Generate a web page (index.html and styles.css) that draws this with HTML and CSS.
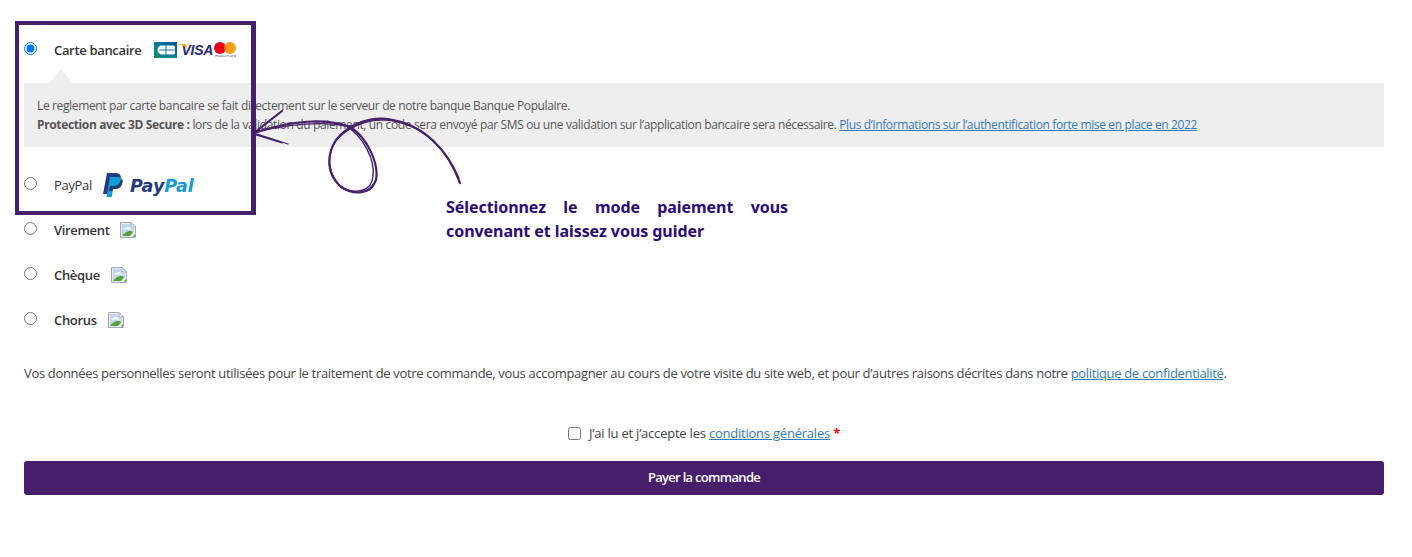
FILE: index.html
```html
<!DOCTYPE html>
<html lang="fr">
<head>
<meta charset="utf-8">
<title>Paiement</title>
<link rel="stylesheet" href="styles.css">
</head>
<body>
<main class="checkout">
  <form class="payment">
    <div class="method">
      <input class="radio" type="radio" name="pay" checked>
      <span class="method-label">Carte bancaire</span>
      <span class="logos">
        <svg class="logo-cb" width="23" height="16" viewBox="0 0 23 16" aria-hidden="true">
          <defs><linearGradient id="cbg" x1="0" y1="1" x2="1" y2="0"><stop offset="0" stop-color="#0b8a6e"/><stop offset=".5" stop-color="#0a7f96"/><stop offset="1" stop-color="#0b4f92"/></linearGradient></defs>
          <rect width="23" height="16" fill="url(#cbg)"/>
          <path d="M11.500 3.500H8a4.500 4.500 0 0 0 0 9h3.500V8.600H5.600V7.400h5.900z" fill="#fff"/>
          <path d="M12.500 3.500H19a2.200 2.200 0 0 1 1.500 3.700v1.600A2.200 2.200 0 0 1 19 12.500h-6.500V8.600h7V7.400h-7z" fill="#fff"/>
        </svg>
        <span class="visa"><svg class="visa-tick" width="9" height="6" viewBox="0 0 9 6" aria-hidden="true"><path d="M0 0h5.500c1 0 1.500.5 1.800 1.500L8 5C6.500 3 4 1 0 .5z" fill="#f2a31d"/></svg>VISA</span>
        <span class="mc">
          <svg width="22" height="12" viewBox="0 0 22 12" aria-hidden="true">
            <circle cx="6" cy="6" r="6" fill="#eb001b"/><circle cx="16" cy="6" r="6" fill="#f79e1b"/>
            <path d="M11 2.680a6 6 0 0 1 0 6.640 6 6 0 0 1 0-6.640z" fill="#ff5f00"/>
          </svg>
          <span class="mc-name">mastercard</span>
        </span>
      </span>
    </div>
    <div class="notice">
      Le reglement par carte bancaire se fait directement sur le serveur de notre banque Banque Populaire.<br>
      <strong>Protection avec 3D Secure :</strong> lors de la validation du paiement, un code sera envoyé par SMS ou une validation sur l’application bancaire sera nécessaire. <a href="#">Plus d’informations sur l’authentification forte mise en place en 2022</a>
    </div>
    <div class="method">
      <input class="radio" type="radio" name="pay">
      <span class="method-label light">PayPal</span>
      <span class="paypal">
        <svg width="20" height="24" viewBox="0 0 20 24" aria-hidden="true">
          <path d="M4 0h8c4 0 6.500 2 6 6-.6 4.500-3.500 7-8 7H7l-1.300 8H0z" fill="#253b80"/>
          <path d="M7 4h7c3.500 0 6 1.500 5.500 5-.6 4.500-3.500 7-7.500 7h-2l-1.200 8H3.500z" fill="#179bd7"/>
          <path d="M7 13h3c4.500 0 7.400-2.500 8-7 2 1 1.900 2 1.500 3-.6 4.500-3.500 7-7.500 7h-2l-.4 2H5.900z" fill="#222d65" opacity=".85"/>
        </svg>
        <span class="pp-word"><span class="pp-dark">Pay</span><span class="pp-light">Pal</span></span>
      </span>
    </div>
    <div class="method">
      <input class="radio" type="radio" name="pay">
      <span class="method-label">Virement</span>
      <svg class="broken" width="16" height="16" viewBox="0 0 16 16" aria-hidden="true"><use href="#broken-img"/></svg>
    </div>
    <div class="method">
      <input class="radio" type="radio" name="pay">
      <span class="method-label">Chèque</span>
      <svg class="broken" width="16" height="16" viewBox="0 0 16 16" aria-hidden="true"><use href="#broken-img"/></svg>
    </div>
    <div class="method">
      <input class="radio" type="radio" name="pay">
      <span class="method-label">Chorus</span>
      <svg class="broken" width="16" height="16" viewBox="0 0 16 16" aria-hidden="true"><use href="#broken-img"/></svg>
    </div>
    <p class="privacy">Vos données personnelles seront utilisées pour le traitement de votre commande, vous accompagner au cours de votre visite du site web, et pour d’autres raisons décrites dans notre <a href="#">politique de confidentialité</a>.</p>
    <label class="terms">
      <input class="check" type="checkbox">
      <span>J’ai lu et j’accepte les <a href="#">conditions générales</a> <b class="req">*</b></span>
    </label>
    <button class="pay-btn" type="button">Payer la commande</button>
  </form>

  <div class="frame"></div>
  <svg class="scribble" width="240" height="110" viewBox="240 90 240 110" aria-hidden="true">
    <g fill="none" stroke="#47206b" stroke-linecap="round">
      <path stroke-width="2.200" d="M460 183C448 150 424 124 388 119C366 117 347 126 336 140C326 156 327 174 340 186C352 195 370 196 376 180C379 164 368 138 350 127C326 118 292 120 254 133"/>
      <path stroke-width="1.400" d="M459 178C446 148 420 122 385 120C364 119 345 129 334 143C325 160 330 176 342 188C355 194 372 192 373 176C375 160 364 137 346 126C320 121 290 124 256 132"/>
      <path stroke-width="2.200" d="M254 133L282 111"/>
      <path stroke-width="1.200" d="M254 133L288 144M256 135L282 143"/>
    </g>
  </svg>
  <p class="callout">Sélectionnez le mode paiement vous convenant et laissez vous guider</p>
</main>

<svg class="defs" width="0" height="0" aria-hidden="true">
  <symbol id="broken-img" viewBox="0 0 16 16">
    <path d="M.5.500h10.500l4.500 4.500v10.500H.5z" fill="#e8eaee" stroke="#a3aab5"/>
    <path d="M2 2h8.500v4H14v7H2z" fill="#c3d7f3"/>
    <path d="M3 7.500c1-2 3-1.500 4-2.500 1.500-.5 3 1 5 2.500z" fill="#f4f7fc"/>
    <path d="M2 14c2-3 5-5 8-5 1 0 2 0 3 1l-3 4z" fill="#4fa32f"/>
    <path d="M11 .5v4.500h4.500z" fill="#f4f5f7" stroke="#a3aab5"/>
    <path d="M9.500 15l5.500-5v2l-3 3z" fill="#fff"/>
    <path d="M12.500 14.500l2.500-2.500v2.500z" fill="#4fa32f"/>
  </symbol>
</svg>
</body>
</html>
```
FILE: styles.css
```css
* { box-sizing: border-box; }
html, body { margin: 0; padding: 0; background: #fff; }
body {
  font-family: "Open Sans", "Noto Sans", sans-serif;
  font-size: 13px;
  letter-spacing: -0.33px;
  color: #444;
}
a { color: #337ab7; text-decoration: underline; }
.checkout { position: relative; padding: 26px 28px 0 24px; width: 1412px; height: 557px; overflow: hidden; }
.payment { display: flex; flex-direction: column; }
.method { display: flex; align-items: center; height: 45px; }
.radio { width: 13px; height: 13px; margin: 0 17px 0 0; flex: none; accent-color: #0075ff; }
.method-label { font-weight: 600; color: #333; line-height: 20px; margin-top: 3px; }
.method-label.light { font-weight: 400; }
.logos { display: flex; align-items: center; margin-left: 13px; margin-top: 3px; gap: 2px; }
.logo-cb { display: block; }
.visa { position: relative; font: italic 700 14px/16px "Liberation Sans", sans-serif; letter-spacing: -0.2px; color: #252b72; width: 33px; padding-left: 2px; }
.visa-tick { position: absolute; left: 0; top: 2px; }
.mc { display: flex; flex-direction: column; align-items: center; }
.mc svg { display: block; }
.mc-name { font-size: 4px; line-height: 4px; letter-spacing: 0; color: #444; }
.notice { position: relative; margin: 12px 0 14px; padding: 13px; height: 64px; background: #eee; font-size: 12px; letter-spacing: -0.36px; line-height: 19px; color: #555; }
.notice strong { font-weight: 700; }
.notice::before { content: ""; position: absolute; left: 25px; top: -14px; border: 12px solid transparent; border-top: 0; border-bottom: 14px solid #eee; }
.paypal { display: flex; align-items: center; margin-left: 11px; gap: 7px; margin-top: 3px; }
.paypal svg { display: block; }
.pp-word { font: italic 700 17.500px/24px "DejaVu Sans", sans-serif; letter-spacing: 0; margin-top: 2px; }
.pp-dark { color: #253b80; }
.pp-light { color: #179bd7; }
.broken { margin-left: 11px; margin-top: 3px; flex: none; }
.defs { position: absolute; }
.privacy { margin: 20px 0 0; line-height: 24px; color: #444; }
.terms { display: flex; align-items: center; justify-content: center; height: 24px; margin-top: 36px; gap: 8px; letter-spacing: -0.22px; }
.check { width: 13px; height: 13px; margin: 0; }
.req { color: #f00; font-weight: 700; }
.pay-btn { height: 34px; margin-top: 16px; padding: 0 0 2px; background: #461e6b; color: #fff; border: 0; border-radius: 3px; font-family: "Open Sans", sans-serif; font-weight: 600; font-size: 13px; letter-spacing: -0.7px; line-height: 32px; }
.frame { position: absolute; left: 15px; top: 21px; width: 241px; height: 194px; border: 4px solid #47206b; border-right-width: 5px; }
.scribble { position: absolute; left: 240px; top: 90px; }
.callout { position: absolute; left: 446px; top: 195px; width: 342px; margin: 0; font-family: "Noto Sans", sans-serif; font-size: 16px; font-weight: 700; letter-spacing: -0.06px; line-height: 24px; color: #2b0b75; text-align: justify; }
```
